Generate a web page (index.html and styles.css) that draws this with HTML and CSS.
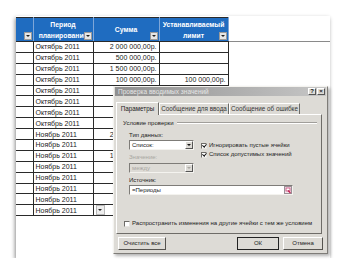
FILE: index.html
```html
<!DOCTYPE html>
<html lang="ru">
<head>
  <meta charset="UTF-8" />
  <title>Проверка вводимых значений</title>
  <link rel="stylesheet" href="styles.css">
</head>
<body>

<div class="sheet">
  <table class="grid">
    <colgroup>
      <col style="width:17px"><col style="width:60px"><col style="width:66px"><col style="width:69px"><col style="width:102px">
    </colgroup>
    <tr class="head">
      <th class="first"><span class="dd"></span></th>
      <th>Период<br>планирование<span class="dd"></span></th>
      <th>Сумма<span class="dd"></span></th>
      <th>Устанавливаемый<br>лимит<span class="dd"></span></th>
      <th class="free"></th>
    </tr>
    <tr><td class="first"></td><td>Октябрь 2011</td><td class="num">2 000 000,00р.</td><td class="num"></td><td class="free"></td></tr>
    <tr><td class="first"></td><td>Октябрь 2011</td><td class="num">500 000,00р.</td><td class="num"></td><td class="free"></td></tr>
    <tr><td class="first"></td><td>Октябрь 2011</td><td class="num">1 500 000,00р.</td><td class="num"></td><td class="free"></td></tr>
    <tr><td class="first"></td><td>Октябрь 2011</td><td class="num">100 000,00р.</td><td class="num">100 000,00р.</td><td class="free"></td></tr>
    <tr><td class="first"></td><td>Октябрь 2011</td><td class="num"></td><td class="num"></td><td class="free"></td></tr>
    <tr><td class="first"></td><td>Октябрь 2011</td><td class="num"></td><td class="num"></td><td class="free"></td></tr>
    <tr><td class="first"></td><td>Октябрь 2011</td><td class="num"></td><td class="num"></td><td class="free"></td></tr>
    <tr><td class="first"></td><td>Октябрь 2011</td><td class="num"></td><td class="num"></td><td class="free"></td></tr>
    <tr><td class="first"></td><td>Ноябрь 2011</td><td class="num">2 000 000,00р.</td><td class="num"></td><td class="free"></td></tr>
    <tr><td class="first"></td><td>Ноябрь 2011</td><td class="num"></td><td class="num"></td><td class="free"></td></tr>
    <tr><td class="first"></td><td>Ноябрь 2011</td><td class="num">1 500 000,00р.</td><td class="num"></td><td class="free"></td></tr>
    <tr><td class="first"></td><td>Ноябрь 2011</td><td class="num"></td><td class="num"></td><td class="free"></td></tr>
    <tr><td class="first"></td><td>Ноябрь 2011</td><td class="num"></td><td class="num"></td><td class="free"></td></tr>
    <tr><td class="first"></td><td>Ноябрь 2011</td><td class="num"></td><td class="num"></td><td class="free"></td></tr>
    <tr><td class="first"></td><td>Ноябрь 2011</td><td class="num"></td><td class="num"></td><td class="free"></td></tr>
    <tr><td class="first"></td><td class="active">Ноябрь 2011<span class="dd cell-dd"></span></td><td class="num"></td><td class="num"></td><td class="free"></td></tr>
  </table>
</div>

<div class="dialog">
  <div class="caption">
    <span>Проверка вводимых значений</span>
    <span class="caption-btns"><span class="cbtn">?</span><span class="cbtn">×</span></span>
  </div>

  <div class="tabs">
    <div class="tab active">Параметры</div>
    <div class="tab" style="width:70px">Сообщение для ввода</div>
    <div class="tab" style="width:71px">Сообщение об ошибке</div>
  </div>

  <div class="panel">
    <div class="group-title"><span>Условие проверки</span><i></i></div>
    <div class="group">
      <div class="lbl">Тип данных:</div>
      <div class="pair">
        <div class="left">
          <div class="select"><span>Список:</span><b class="arrow"></b></div>
          <div class="lbl gray">Значение:</div>
          <div class="select disabled"><span>между</span><b class="arrow"></b></div>
        </div>
        <div class="checks">
          <div class="check"><span class="box on"></span>Игнорировать пустые ячейки</div>
          <div class="check"><span class="box on"></span>Список допустимых значений</div>
        </div>
      </div>
      <div class="lbl src">Источник:</div>
      <div class="input">
        <span>=Периоды</span>
        <svg class="pick" width="8" height="8" viewBox="0 0 8 8">
          <rect x="0.5" y="0.5" width="7" height="7" fill="#f4e8ee" stroke="#9a8f96"/>
          <rect x="2" y="2" width="4" height="3" fill="#fff" stroke="#c04070" stroke-width="0.8"/>
          <path d="M4 4.5 L6.5 7" stroke="#c02050" stroke-width="1.2"/>
        </svg>
      </div>
    </div>
    <div class="check spread"><span class="box"></span>Распространить изменения на другие ячейки с тем же условием</div>
  </div>

  <div class="buttons">
    <div class="btn" style="width:48px">Очистить все</div>
    <div class="spacer"></div>
    <div class="btn default" style="width:42px">ОК</div>
    <div class="btn" style="width:40px">Отмена</div>
  </div>
</div>

</body>
</html>
```

FILE: styles.css
```css
body {
  margin: 0;
  background-color: #fff;
  font-family: 'Liberation Sans', Arial, sans-serif;
  color: #222;
}
.sheet {
  margin: 16px 0 0 16px;
  width: 314px;
  height: 242px;
  padding-top: 1px;
  box-sizing: border-box;
  background-color: #fff;
  box-shadow: -1px 2px 4px rgba(0,0,0,0.45);
}
.grid {
  border-collapse: collapse;
  table-layout: fixed;
  font-size: 7px;
}
.grid td, .grid th {
  padding: 0 2px;
  height: 9.9px;
  border: 1px solid #2a2a2a;
  white-space: nowrap;
  overflow: hidden;
  position: relative;
  line-height: 9px;
}
.grid .first {
  border-left: none;
}
.grid .free {
  border: none;
}
.grid th.free {
  border-bottom: 1px solid #8a8a8a;
  background: #fff;
}
.head th {
  height: 23px;
  background-color: #1f6cc0;
  color: #fff;
  font-weight: bold;
  font-size: 6.8px;
  line-height: 11px;
  text-align: center;
  vertical-align: middle;
  border-color: #2a2a2a #7ea6d8;
  text-overflow: clip;
}
.head th.first {
  border-right-color: #7ea6d8;
}
.dd {
  position: absolute;
  right: 1px;
  bottom: 1px;
  width: 6px;
  height: 6px;
  background-color: #e6e6e6;
  border: 1px solid #9a9a9a;
}
.dd::after {
  content: "";
  position: absolute;
  left: 1px;
  top: 2px;
  border-left: 2px solid transparent;
  border-right: 2px solid transparent;
  border-top: 2px solid #222;
}
.grid .num {
  text-align: right;
}
.grid td.active {
  overflow: visible;
}
.cell-dd {
  right: -12px;
  bottom: 0px;
  width: 7px;
  height: 8px;
  background-color: #eeeeee;
  border-color: #b8b8b8;
  z-index: 1;
}
.cell-dd::after {
  left: 1.5px;
  top: 3px;
}

/* dialog */
.dialog {
  position: absolute;
  left: 113px;
  top: 86px;
  width: 215px;
  height: 168px;
  box-sizing: border-box;
  background-color: #dddbd6;
  border: 1px solid;
  border-color: #f4f3ef #7e7c78 #7e7c78 #f4f3ef;
  box-shadow: 2px 2px 3px rgba(0,0,0,0.3);
  display: flex;
  flex-direction: column;
  font-size: 6px;
  line-height: 7px;
}
.caption {
  height: 9px;
  margin: 0 1px;
  padding-left: 3px;
  background: linear-gradient(to right, #8f8f8f, #c6c6c6);
  color: #e6e6e6;
  font-size: 6.5px;
  display: flex;
  align-items: center;
  justify-content: space-between;
}
.caption-btns {
  display: flex;
  gap: 1px;
  padding-right: 1px;
}
.cbtn {
  width: 8px;
  height: 7px;
  background-color: #dddbd6;
  border: 1px solid;
  border-color: #fff #555 #555 #fff;
  box-sizing: border-box;
  color: #111;
  font-size: 6px;
  font-weight: bold;
  line-height: 5px;
  text-align: center;
}
.tabs {
  margin-top: 4px;
  padding-left: 2px;
  display: flex;
  align-items: flex-end;
  height: 14px;
}
.tab {
  height: 11px;
  box-sizing: border-box;
  border: 1px solid;
  border-color: #fff #6e6c68 transparent #fff;
  border-bottom: none;
  font-size: 6.3px;
  line-height: 10px;
  text-align: center;
  color: #333;
}
.tab.active {
  width: 43px;
  height: 13px;
  line-height: 12px;
  position: relative;
  top: 1px;
  background-color: #dddbd6;
  color: #222;
}
.panel {
  margin: 0 5px 0 2px;
  height: 120px;
  box-sizing: border-box;
  border: 1px solid;
  border-color: #fff #6e6c68 #6e6c68 #fff;
  padding: 4px 0 0 6px;
}
.group-title {
  display: flex;
  align-items: center;
  height: 8px;
}
.group-title i {
  flex: 1;
  margin: 0 4px 0 3px;
  border-top: 1px solid #a09e9a;
  border-bottom: 1px solid #fff;
}
.group {
  padding-left: 6px;
}
.lbl {
  height: 8px;
  line-height: 8px;
  margin-top: 4px;
}
.lbl.gray {
  color: #a9a7a2;
  margin-top: 3px;
}
.lbl.src {
  margin-top: 3px;
}
.pair {
  display: grid;
  grid-template-columns: 65px auto;
  gap: 7px;
  margin-top: 1px;
}
.select {
  height: 10px;
  box-sizing: border-box;
  background-color: #fff;
  border: 1px solid;
  border-color: #7e7c78 #f4f3ef #f4f3ef #7e7c78;
  display: flex;
  align-items: center;
  padding-left: 2px;
  justify-content: space-between;
  line-height: 7px;
}
.select.disabled {
  margin-top: 2px;
  background-color: #dddbd6;
  color: #a9a7a2;
}
.arrow {
  width: 8px;
  height: 8px;
  box-sizing: border-box;
  background-color: #dddbd6;
  border: 1px solid;
  border-color: #fff #555 #555 #fff;
  position: relative;
}
.arrow::after {
  content: "";
  position: absolute;
  left: 1px;
  top: 2px;
  border-left: 2px solid transparent;
  border-right: 2px solid transparent;
  border-top: 2px solid #111;
}
.disabled .arrow::after {
  border-top-color: #a9a7a2;
}
.checks {
  padding-top: 1px;
}
.check {
  height: 9px;
  display: flex;
  align-items: center;
  white-space: nowrap;
}
.box {
  width: 6px;
  height: 6px;
  box-sizing: border-box;
  margin-right: 2px;
  background-color: #fff;
  border: 1px solid;
  border-color: #6e6c68 #e8e6e2 #e8e6e2 #6e6c68;
  position: relative;
}
.box.on::after {
  content: "";
  position: absolute;
  left: 1px;
  top: -0.5px;
  width: 1.5px;
  height: 3px;
  border: solid #111;
  border-width: 0 1px 1px 0;
  transform: rotate(40deg);
}
.input {
  margin-top: 1px;
  width: 164px;
  height: 10px;
  box-sizing: border-box;
  background-color: #fff;
  border: 1px solid;
  border-color: #7e7c78 #f4f3ef #f4f3ef #7e7c78;
  display: flex;
  align-items: center;
  justify-content: space-between;
  padding-left: 2px;
}
.pick {
  display: block;
}
.check.spread {
  margin-top: 24px;
  margin-left: 1px;
}
.buttons {
  margin-top: 3px;
  padding: 0 4px;
  display: flex;
  gap: 4px;
}
.spacer {
  flex: 1;
}
.btn {
  height: 13px;
  box-sizing: border-box;
  border: 1px solid;
  border-color: #fff #55534f #55534f #fff;
  line-height: 11px;
  text-align: center;
  font-size: 6px;
}
.btn.default {
  outline: 1px solid #222;
  outline-offset: -1px;
}
```
